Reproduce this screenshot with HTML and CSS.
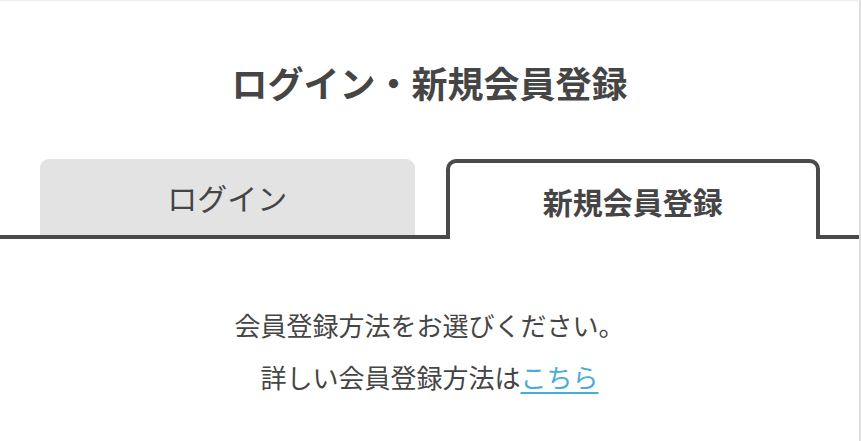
FILE: index.html
```html
<!DOCTYPE html>
<html lang="ja">
<head>
<meta charset="utf-8">
<title>ログイン・新規会員登録</title>
<link rel="stylesheet" href="styles.css">
</head>
<body>
<div class="page">
  <h1 class="title">ログイン・新規会員登録</h1>
  <div class="tabs">
    <div class="tab tab-inactive">ログイン</div>
    <div class="tab tab-active">新規会員登録</div>
  </div>
  <div class="body">
    <p class="line">会員登録方法をお選びください。</p>
    <p class="line">詳しい会員登録方法は<a class="link" href="#">こちら</a></p>
  </div>
</div>
</body>
</html>
```

FILE: styles.css
```css
html, body {
  margin: 0;
  padding: 0;
  background: #ffffff;
}
body {
  font-family: "Noto Sans CJK JP", "Noto Sans", sans-serif;
  color: #454545;
}
.page {
  width: 859px;
  height: 440px;
  border-top: 1px solid #eeeeee;
  border-right: 2px solid #e0e0e0;
  overflow: hidden;
}
.title {
  margin: 0;
  padding-top: 54px;
  font-size: 36px;
  line-height: 54px;
  font-weight: 700;
  text-align: center;
  color: #454545;
}
.tabs {
  display: grid;
  grid-template-columns: 1fr 1fr;
  column-gap: 31px;
  margin-top: 50px;
  padding: 0 39px 0 40px;
  border-bottom: 4px solid #4a4a4a;
}
.tab {
  display: flex;
  align-items: center;
  justify-content: center;
  font-size: 30px;
  box-sizing: border-box;
  min-width: 0;
}
.tab-inactive {
  height: 76px;
  background: #e3e3e3;
  border-radius: 9px 9px 0 0;
  color: #454545;
}
.tab-active {
  height: 80px;
  margin-bottom: -4px;
  border: 4px solid #4a4a4a;
  border-bottom: 0;
  border-radius: 10px 10px 0 0;
  background: #ffffff;
  font-weight: 700;
  color: #454545;
}
.body {
  padding-top: 60px;
  text-align: center;
}
.line {
  margin: 0;
  font-size: 26px;
  line-height: 52px;
}
.link {
  color: #47acd8;
  text-decoration: underline;
  text-decoration-thickness: 2px;
  text-underline-offset: 4px;
}
```
